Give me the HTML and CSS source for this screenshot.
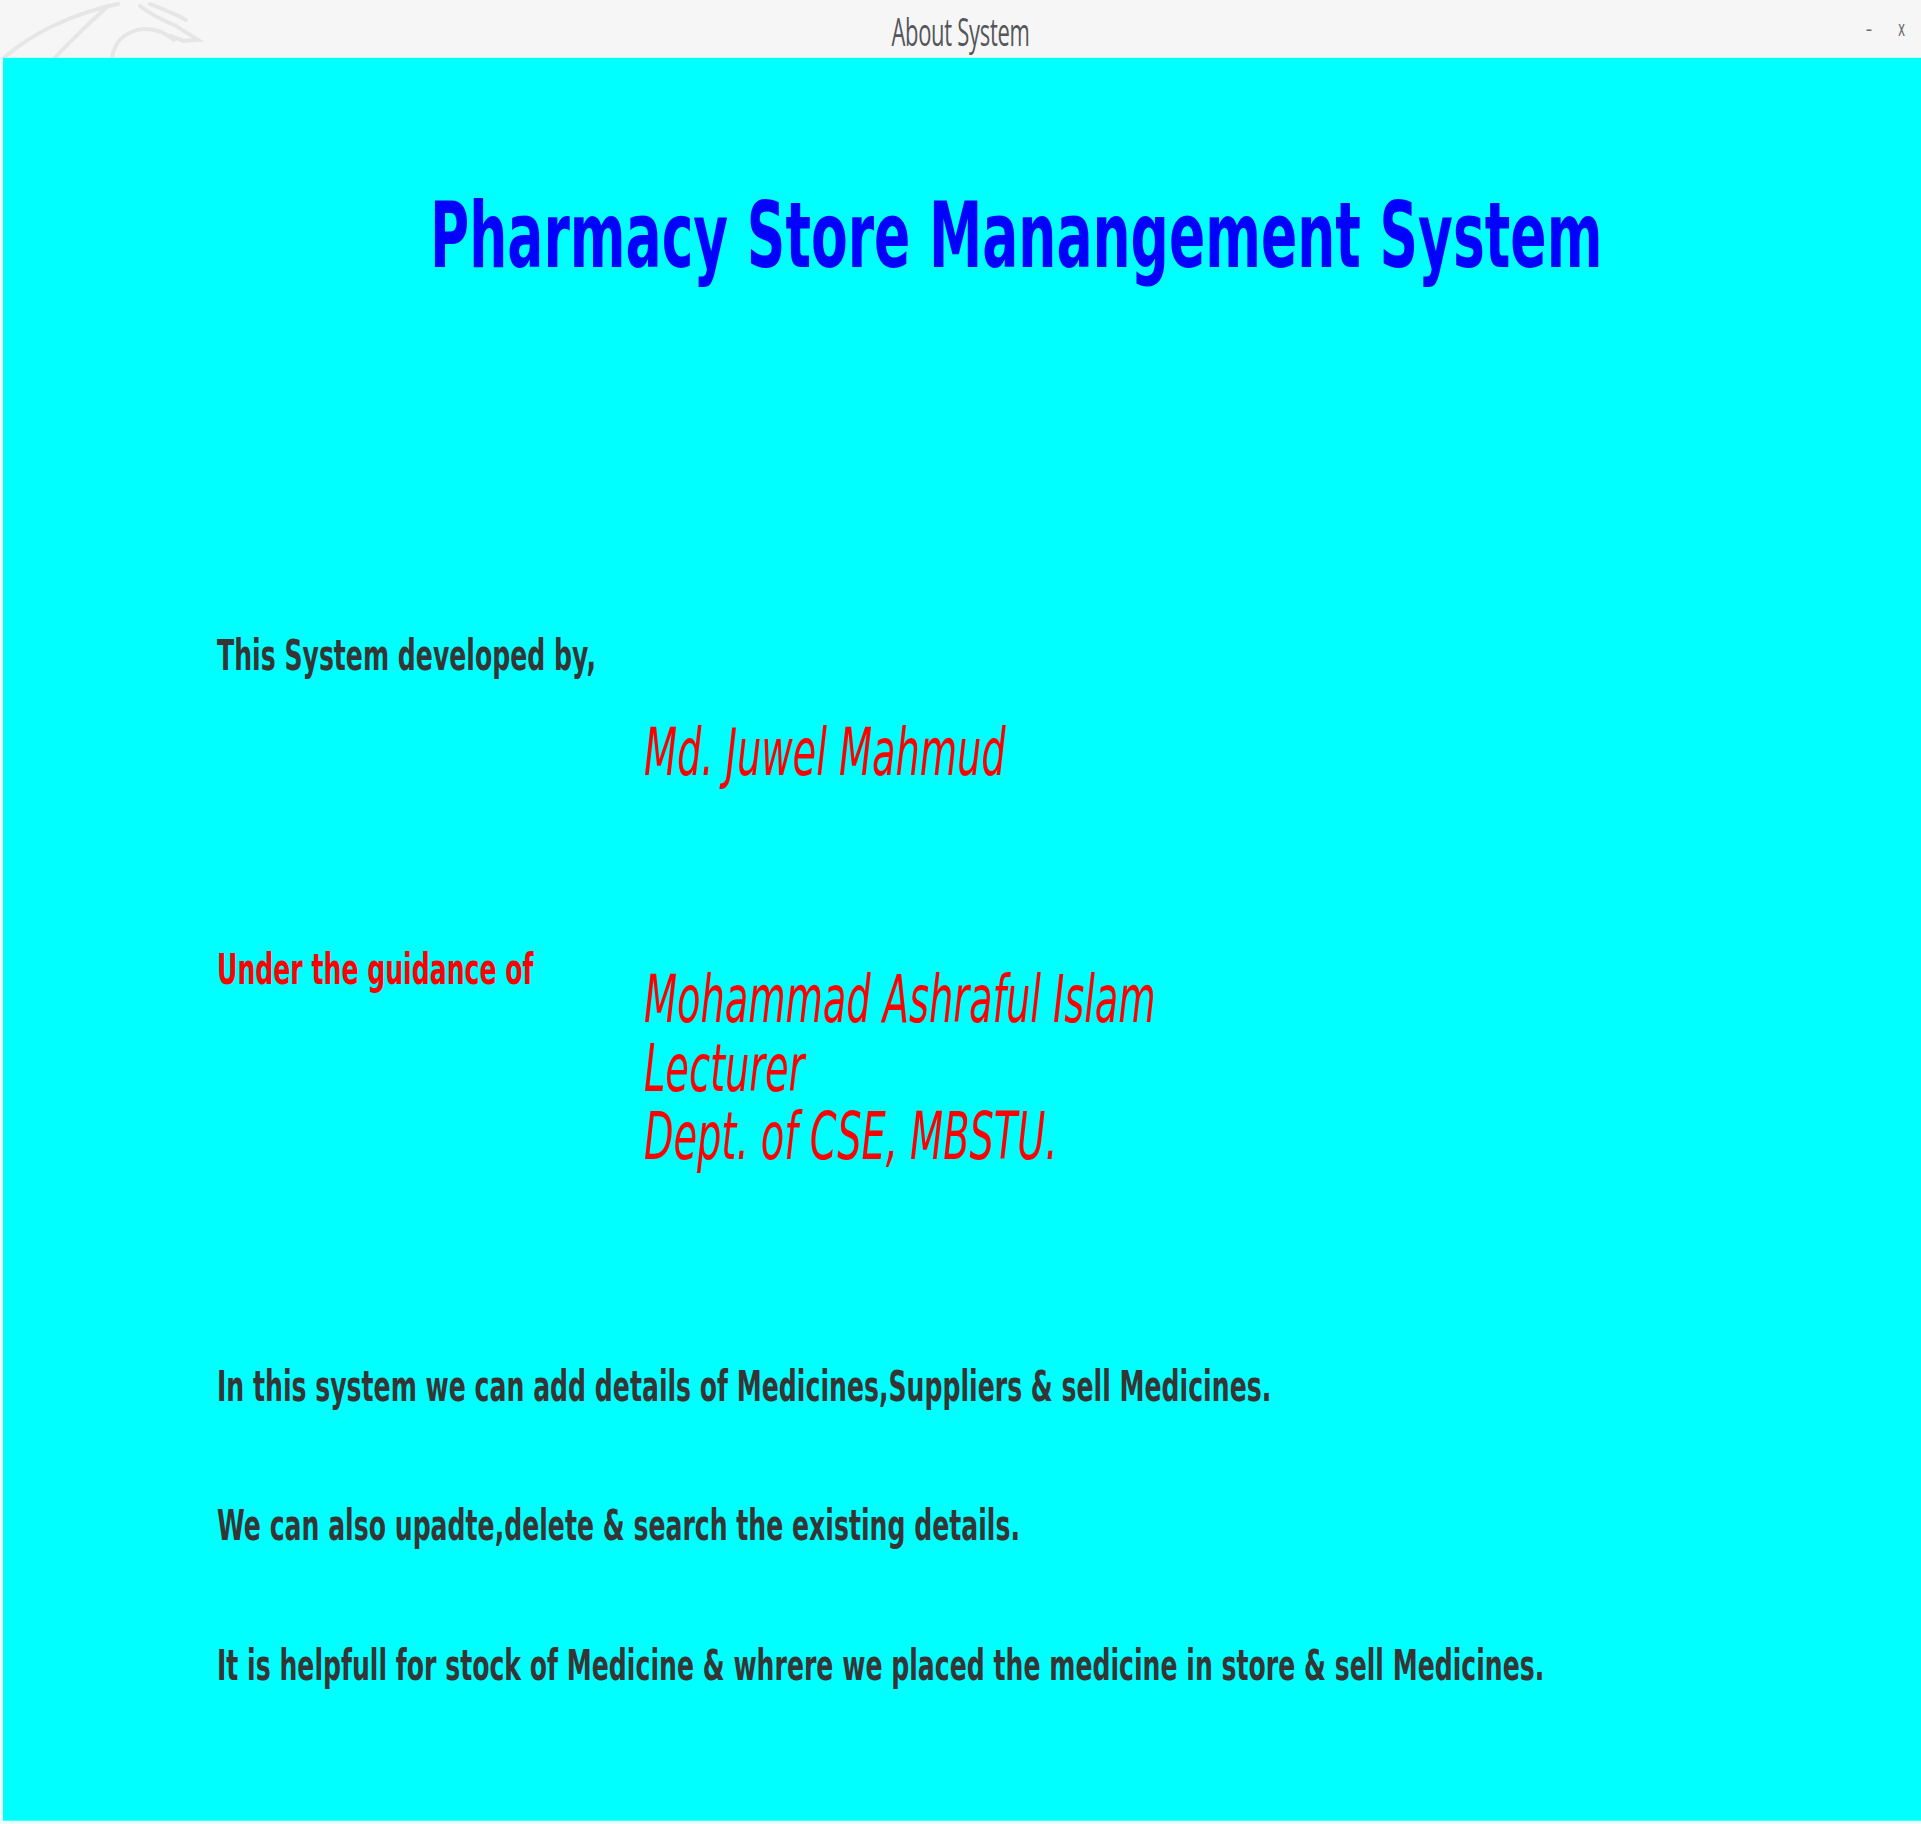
FILE: index.html
```html
<!DOCTYPE html>
<html lang="en">
<head>
<meta charset="utf-8">
<title>About System</title>
<link rel="stylesheet" href="styles.css">
</head>
<body>
<div class="window">
  <header class="titlebar">
    <div class="logo">
      <svg viewBox="0 0 210 58" preserveAspectRatio="none" width="210" height="34">
        <path d="M4 58 C30 35 70 14 118 4" />
        <path d="M55 58 C75 36 95 18 108 6" />
        <path d="M112 58 C114 44 122 34 138 30 C152 27 164 32 174 40" />
        <path d="M140 6 C150 14 162 20 176 26 L198 40 L184 41 L170 36" />
        <path d="M150 4 C160 8 172 12 186 20" />
      </svg>
    </div>
    <div class="title">About System</div>
    <div class="controls"><span class="ctl">&ndash;</span><span class="ctl">x</span></div>
  </header>
  <main class="content">
    <h1 class="heading">Pharmacy Store Manangement System</h1>
    <section class="credits">
      <p class="label dark dev-label">This System developed by,</p>
      <p class="name dev-name">Md. Juwel Mahmud</p>
      <p class="label red guide-label">Under the guidance of</p>
      <div class="name guide-name">
        <div class="gline">Mohammad Ashraful Islam</div>
        <div class="gline">Lecturer</div>
        <div class="gline">Dept. of CSE, MBSTU.</div>
      </div>
    </section>
    <section class="about">
      <p class="label dark">In this system we can add details of Medicines,Suppliers &amp; sell Medicines.</p>
      <p class="label dark">We can also upadte,delete &amp; search the existing details.</p>
      <p class="label dark">It is helpfull for stock of Medicine &amp; whrere we placed the medicine in store &amp; sell Medicines.</p>
    </section>
  </main>
</div>
</body>
</html>
```

FILE: styles.css
```css
html {
  margin: 0;
  padding: 0;
  overflow: hidden;
  background: #ffffff;
}

body {
  margin: 0;
  padding: 0;
  height: 1824px;
}

.window {
  width: 1921px;
  height: 1073px;
  display: flex;
  flex-direction: column;
  transform: scaleY(1.7);
  transform-origin: 0 0;
  font-family: "DejaVu Sans", sans-serif;
}

.titlebar {
  height: 34.1px;
  flex: none;
  background: #f6f6f6;
  display: grid;
  grid-template-columns: 1fr auto 1fr;
  align-items: center;
}

.logo {
  height: 34px;
  overflow: hidden;
}

.logo svg {
  display: block;
}

.logo path {
  fill: none;
  stroke: #e6e6e6;
  stroke-width: 4;
  stroke-linecap: round;
}

.title {
  font-family: "Open Sans", sans-serif;
  font-size: 22px;
  line-height: 1;
  color: #55565a;
  letter-spacing: -0.3px;
  padding-top: 1px;
}

.controls {
  justify-self: end;
  display: flex;
  gap: 26px;
  padding-right: 16px;
  font-family: "DejaVu Sans", sans-serif;
  font-size: 12px;
  color: #6b6b6b;
  line-height: 1;
}

.content {
  flex: 1;
  background: #00ffff;
  border-left: 3px solid #eaffff;
  border-bottom: 2px solid #eaffff;
  display: flex;
  flex-direction: column;
}

.heading {
  margin: 77.6px 0 0 427px;
  font-size: 53.5px;
  line-height: 1;
  font-weight: bold;
  color: #0000ff;
}

.credits {
  margin-top: 208.3px;
  padding-left: 214px;
  display: grid;
  grid-template-columns: 427px auto;
  align-items: start;
}

p {
  margin: 0;
}

.label {
  font-size: 25.15px;
  line-height: 1;
  font-weight: bold;
  white-space: nowrap;
}

.dark {
  color: #353535;
}

.red {
  color: #ff0000;
}

.name {
  font-size: 38.3px;
  font-style: italic;
  font-weight: normal;
  color: #ff0000;
  grid-column: 2;
  white-space: nowrap;
}

.dev-label {
  grid-column: 1;
  grid-row: 1;
}

.dev-name {
  grid-row: 2;
  line-height: 1;
  margin-top: 25px;
}

.guide-label {
  grid-column: 1;
  grid-row: 3;
  margin-top: 96px;
}

.guide-name {
  grid-row: 3;
  margin-top: 96px;
  padding-top: 10.1px;
  line-height: 40.5px;
}

.about {
  margin-top: 113px;
  padding-left: 214px;
  display: flex;
  flex-direction: column;
  gap: 57px;
}
```
